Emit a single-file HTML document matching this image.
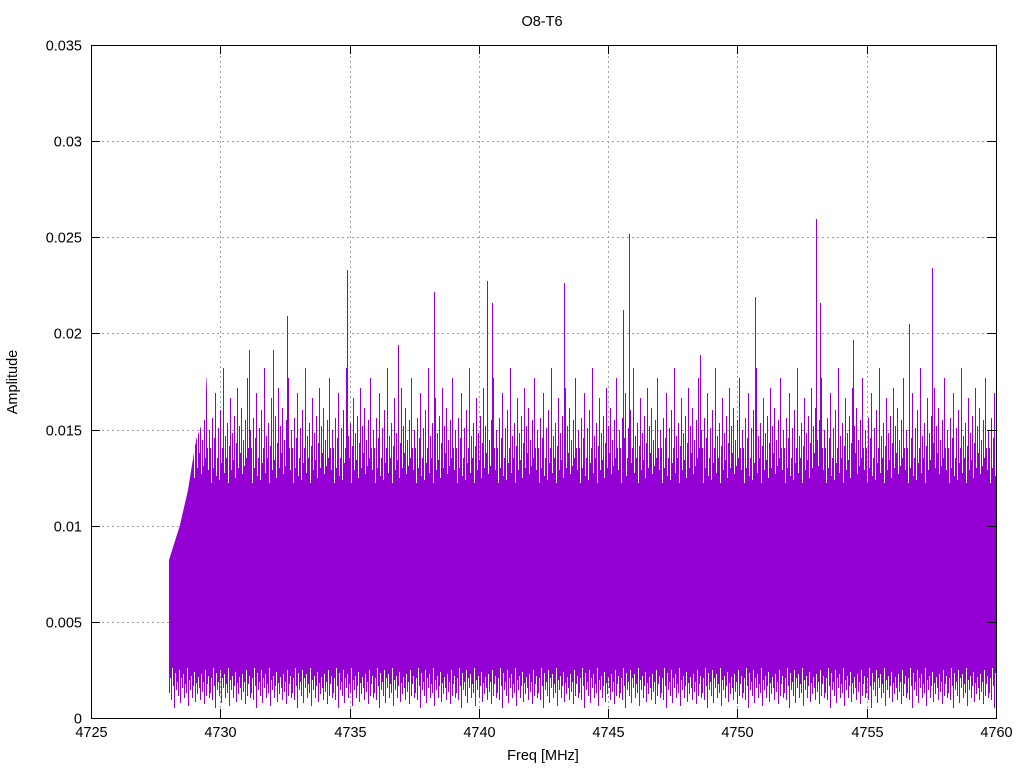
<!DOCTYPE html>
<html><head><meta charset="utf-8"><style>
html,body{margin:0;padding:0;background:#fff;}
svg{display:block;font-family:"Liberation Sans",sans-serif;}
</style></head><body>
<svg id="s" width="1024" height="768" xmlns="http://www.w3.org/2000/svg">
<defs>
<clipPath id="cp"><polygon points="169,718 169,560 180,525 188,490 196,440 205,415 210,298 996,298 996,718"/></clipPath>
<pattern id="pt" patternUnits="userSpaceOnUse" x="169" y="298" width="41" height="420">
<path stroke="#9400d3" stroke-width="1" fill="none" d="
M0.5 395V150 M1.5 380V185 M2.5 402V120 M3.5 370V170 M4.5 388V140 M5.5 410V95 M6.5 375V178 M7.5 392V160
M8.5 384V130 M9.5 398V182 M10.5 372V112 M11.5 405V165 M12.5 380V150 M13.5 390V70 M14.5 376V175 M15.5 400V138
M16.5 386V160 M17.5 395V125 M18.5 370V185 M19.5 408V148 M20.5 382V100 M21.5 392V172 M22.5 378V135 M23.5 400V162
M24.5 388V118 M25.5 374V180 M26.5 404V145 M27.5 385V90 M28.5 396V170 M29.5 379V128 M30.5 390V155 M31.5 402V110
M32.5 376V176 M33.5 394V142 M34.5 384V168 M35.5 406V122 M36.5 372V160 M37.5 398V80 M38.5 386V150 M39.5 378V172 M40.5 400V132"/>
</pattern>
</defs>
<rect width="1024" height="768" fill="#fff"/>
<g id="grid" stroke="#a0a0a0" stroke-width="1" stroke-dasharray="2,3"></g>
<rect x="169" y="298" width="827" height="420" fill="url(#pt)" clip-path="url(#cp)"/>
<polygon fill="#9400d3" points="169,655 169,570 180,545 200,505 230,495 960,495 980,510 996,530 996,655"/>
<path stroke="#9400d3" stroke-width="1" fill="none" d="M347.5 600V270 M487.5 600V281 M629.5 600V234 M816.5 600V219 M932.5 600V268 M434.5 600V292 M564.5 600V283 M492.5 600V303 M820.5 600V303 M287.5 600V316 M909.5 600V324 M755.5 600V297 M623.5 600V310 M273.5 600V350 M249.5 600V350 M398.5 600V345 M700.5 600V355 M853.5 600V340"/>
<rect x="91.5" y="45.5" width="905" height="673" fill="none" stroke="#000" stroke-width="1"/>
<g id="ticks" stroke="#000" stroke-width="1"></g>
<g id="labels" font-size="14.5" fill="#000"></g>
<text x="542" y="26" font-size="14.5" text-anchor="middle">O8-T6</text>
<text x="543" y="760" font-size="14.5" text-anchor="middle">Freq [MHz]</text>
<text transform="translate(17,382) rotate(-90)" font-size="14.5" text-anchor="middle">Amplitude</text>
</svg>
<script>
var NS="http://www.w3.org/2000/svg";
function el(p,t,a){var e=document.createElementNS(NS,t);for(var k in a)e.setAttribute(k,a[k]);p.appendChild(e);return e;}
var x0=91,x1=996,y0=718,y1=45;
function X(f){return x0+(f-4725)/35*(x1-x0);}
function Y(a){return y0-(a/0.035)*(y0-y1);}
var g=document.getElementById('grid'),t=document.getElementById('ticks'),L=document.getElementById('labels');
for(var i=0;i<=7;i++){var f=4725+5*i,x=Math.round(X(f))+0.5;
 if(i>0&&i<7)el(g,'line',{x1:x,y1:46,x2:x,y2:718});
 el(t,'line',{x1:x,y1:718,x2:x,y2:709});el(t,'line',{x1:x,y1:45,x2:x,y2:54});
 var tx=el(L,'text',{x:x,y:737,'text-anchor':'middle'});tx.textContent=f;}
var lab=['0','0.005','0.01','0.015','0.02','0.025','0.03','0.035'];
for(var i=0;i<=7;i++){var y=Math.round(Y(0.005*i))+0.5;
 if(i>0&&i<7)el(g,'line',{x1:92,y1:y,x2:996,y2:y});
 el(t,'line',{x1:91,y1:y,x2:100,y2:y});el(t,'line',{x1:996,y1:y,x2:987,y2:y});
 var tx=el(L,'text',{x:82,y:y+5,'text-anchor':'end'});tx.textContent=lab[i];}
</script>
</body></html>
